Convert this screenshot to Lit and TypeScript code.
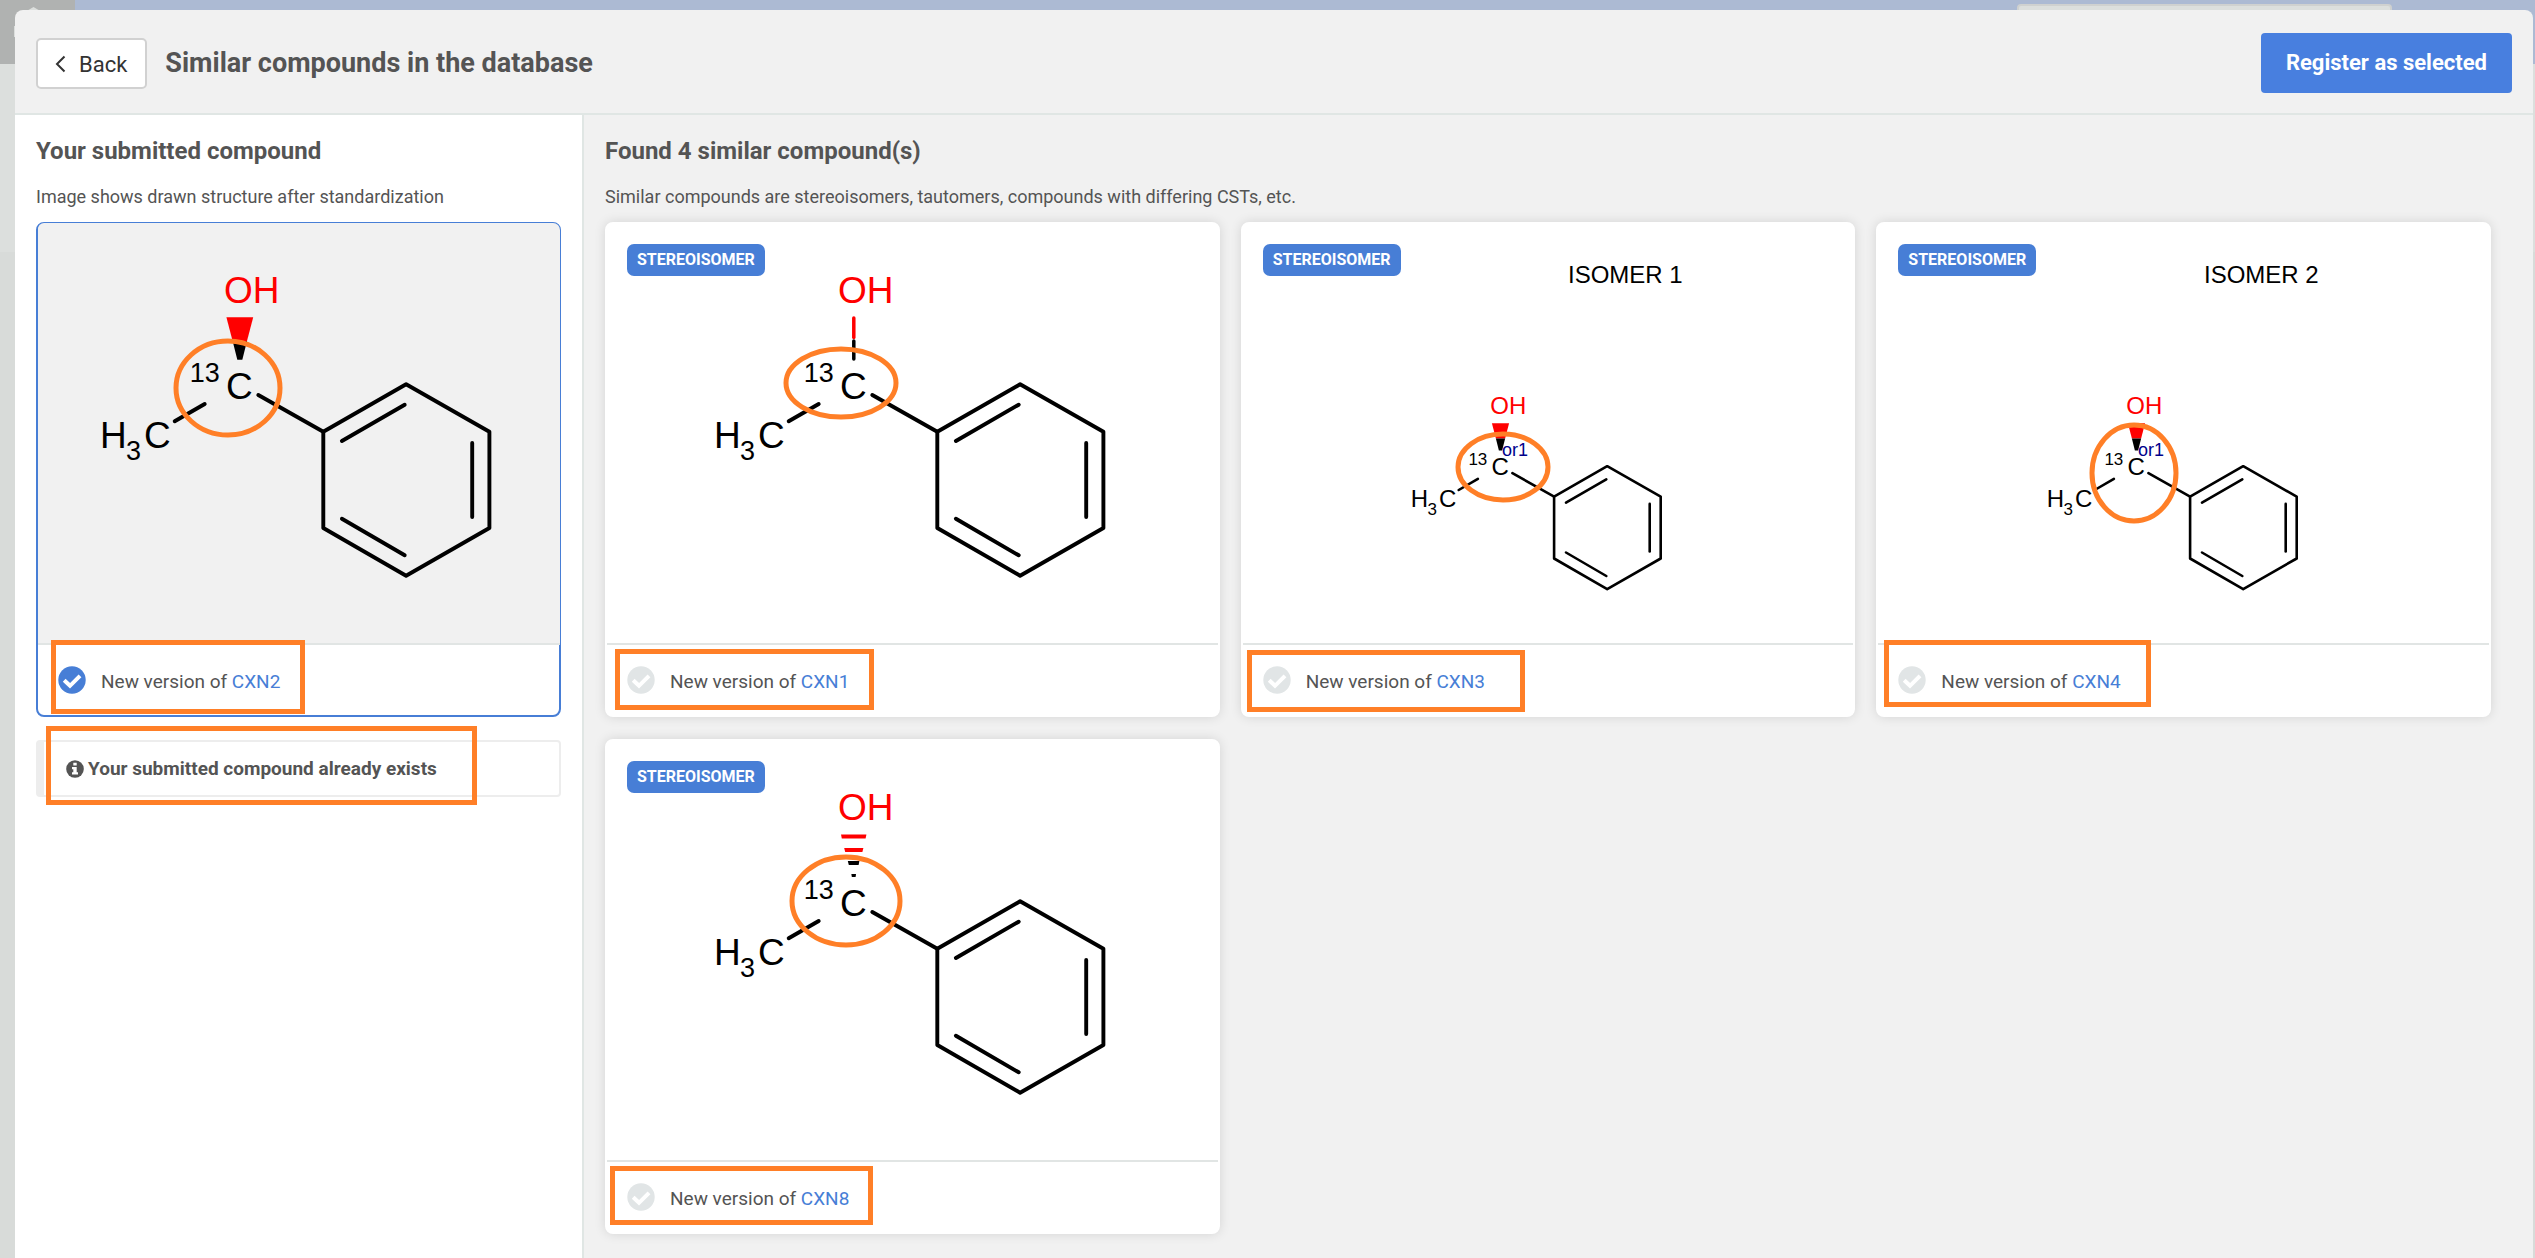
import { LitElement, html, svg, css, nothing } from "lit";
import { customElement, property } from "lit/decorators.js";
import { styleMap } from "lit/directives/style-map.js";
import { classMap } from "lit/directives/class-map.js";

type Bond = "wedge" | "plain" | "hash";

interface Compound {
  id: string;
  bond: Bond;
  small?: boolean;
  caption?: string;
  tag?: string;
  selected?: boolean;
  ring: { cx: number; cy: number; rx: number; ry: number };
  mark: { left: number; top: number; width: number; height: number };
}

const SUBMITTED: Compound = {
  id: "CXN2",
  bond: "wedge",
  selected: true,
  ring: { cx: 193, cy: 166, rx: 52, ry: 47 },
  mark: { left: 15, top: 418, width: 254, height: 74 },
};

const SIMILAR: Compound[] = [
  {
    id: "CXN1",
    bond: "plain",
    tag: "STEREOISOMER",
    ring: { cx: 192, cy: 161, rx: 55, ry: 34 },
    mark: { left: 10, top: 427, width: 259, height: 61 },
  },
  {
    id: "CXN3",
    bond: "wedge",
    small: true,
    caption: "ISOMER 1",
    tag: "STEREOISOMER",
    ring: { cx: 219, cy: 245, rx: 45, ry: 33 },
    mark: { left: 6, top: 428, width: 278, height: 62 },
  },
  {
    id: "CXN4",
    bond: "wedge",
    small: true,
    caption: "ISOMER 2",
    tag: "STEREOISOMER",
    ring: { cx: 214, cy: 251, rx: 42, ry: 48 },
    mark: { left: 8, top: 418, width: 267, height: 67 },
  },
  {
    id: "CXN8",
    bond: "hash",
    tag: "STEREOISOMER",
    ring: { cx: 197, cy: 162, rx: 54, ry: 44 },
    mark: { left: 5, top: 427, width: 263, height: 59 },
  },
];

@customElement("compound-structure")
export class CompoundStructure extends LitElement {
  @property({ attribute: false }) compound!: Compound;

  static styles = css`
    :host {
      display: flex;
      justify-content: center;
    }
    .drawing {
      display: block;
      width: 525px;
      height: 419px;
      flex: none;
      overflow: visible;
      font-family: "Liberation Sans", Arial, sans-serif;
      fill: #000;
    }
    .bond {
      stroke: #000;
      stroke-linecap: round;
      stroke-linejoin: round;
      fill: none;
    }
    .oxygen-bond {
      stroke: #f00;
    }
    .oxygen {
      fill: #f00;
    }
    .label {
      fill: #00008b;
    }
    .ring {
      fill: none;
      stroke: #ff7f27;
      stroke-width: 5;
    }
  `;

  render() {
    const c = this.compound;
    const k = c.small ? 0.642 : 1;
    const dx = c.small ? 85 : 0;
    const dy = c.small ? 140 : 0;
    const X = (v: number) => Math.round((v * k + dx) * 10) / 10;
    const Y = (v: number) => Math.round((v * k + dy) * 10) / 10;
    const P = (pts: number[][]) =>
      pts.map(([x, y]) => `${X(x)},${Y(y)}`).join(" ");
    const big = c.small ? 24 : 37;
    const sub = c.small ? 17 : 27;
    const line = (pts: number[][]) =>
      svg`<polyline class="bond" stroke-width=${c.small ? 2.6 : 3.9} points=${P(pts)} />`;

    const wedge = svg`
      <polygon class="oxygen" points=${P([[191.4, 95.3], [218.2, 95.3], [212, 119], [197.6, 119]])} />
      <polygon points=${P([[197.6, 119], [212, 119], [207.3, 137.7], [202.3, 137.7]])} />`;
    const plain = svg`
      <path class="bond" stroke-width="3.5" d="M204.8 119V137" />
      <path class="bond oxygen-bond" stroke-width="3.5" d="M204.8 96V115.500" />`;
    const hash = svg`
      <polygon class="oxygen" points="192,95.500 217.400,95.500 216.600,99.500 192.800,99.500" />
      <polygon class="oxygen" points="195.200,109 214.400,109 213.400,113 196.200,113" />
      <polygon points="198.800,122 210.400,122 209.600,126 199.800,126" />
      <polygon points="202.400,135 207,135 206.600,138 202.800,138" />`;

    return html`
      <svg class="drawing" viewBox="1 2 525 419" role="img" aria-label=${`Structure of ${c.id}`}>
        <text class="oxygen" font-size=${big} x=${X(189)} y=${Y(81.3)}>OH</text>
        ${c.bond === "wedge" ? wedge : c.bond === "plain" ? plain : hash}
        <text font-size=${sub} x=${X(154.8)} y=${Y(160)}>13</text>
        <text font-size=${big} x=${X(191)} y=${Y(176.7)}>C</text>
        <text font-size=${big} x=${X(65)} y=${Y(225.7)}>H</text>
        <text font-size=${sub} x=${X(91)} y=${Y(237.5)}>3</text>
        <text font-size=${big} x=${X(109)} y=${Y(225.7)}>C</text>
        ${c.small ? svg`<text class="label" font-size="18" x="218" y="234">or1</text>` : nothing}
        ${line([[139.7, 199.3], [169.7, 182]])}
        ${line([[223.3, 173], [288.3, 209.7]])}
        ${line([[288.3, 209.7], [371.1, 162.3], [454.4, 209.7], [454.4, 306], [371.1, 353.7], [288.3, 306], [288.3, 209.7]])}
        ${line([[306.9, 219], [369.7, 182.7]])}
        ${line([[437.2, 221], [437.2, 295]])}
        ${line([[306.9, 296.7], [369.7, 333.3]])}
        ${c.caption ? svg`<text font-size="24" x="284" y="61">${c.caption}</text>` : nothing}
        <ellipse class="ring" cx=${c.ring.cx} cy=${c.ring.cy} rx=${c.ring.rx} ry=${c.ring.ry} />
      </svg>
    `;
  }
}

@customElement("compound-card")
export class CompoundCard extends LitElement {
  @property({ attribute: false }) compound!: Compound;

  static styles = css`
    :host {
      display: block;
      min-width: 0;
    }
    .card {
      position: relative;
      box-sizing: border-box;
      border: 2px solid #fff;
      border-radius: 8px;
      background: #fff;
      box-shadow: 0 0 12px rgba(0, 0, 0, 0.12);
    }
    .card.selected {
      border-color: #477ed6;
      box-shadow: none;
    }
    .picture {
      border-bottom: 2px solid #e1e5e4;
    }
    .selected .picture {
      margin: -1px -1px 0 0;
      padding: 1px 1px 0 0;
      background: #f1f1f1;
      border-radius: 6px 7px 0 0;
    }
    .tag {
      position: absolute;
      top: 20px;
      left: 20px;
      padding: 0 10px;
      border-radius: 7px;
      background: #477ed6;
      color: #fff;
      font-size: 16px;
      line-height: 32px;
      font-weight: 700;
    }
    .choice {
      display: flex;
      align-items: center;
      gap: 15px;
      height: 70px;
      padding: 0 20px;
      font-size: 19px;
      line-height: 28px;
    }
    .pick {
      display: flex;
      padding: 0;
      border: 0;
      background: none;
      color: #e1e5e6;
      cursor: pointer;
    }
    .selected .pick {
      color: #477ed6;
    }
    .tick {
      display: block;
      width: 28px;
      height: 28px;
    }
    .version {
      padding-top: 3px;
    }
    .link {
      color: #477ed6;
      text-decoration: none;
    }
    .mark {
      position: absolute;
      box-sizing: border-box;
      border: 5px solid #ff7f27;
      margin: -2px 0 0 -2px;
      pointer-events: none;
    }
  `;

  render() {
    const c = this.compound;
    const m = c.mark;
    return html`
      <article class=${classMap({ card: true, selected: !!c.selected })}>
        <compound-structure class="picture" .compound=${c}></compound-structure>
        ${c.tag ? html`<span class="tag">${c.tag}</span>` : nothing}
        <div class="choice">
          <button class="pick" type="button" aria-pressed=${c.selected ? "true" : "false"} aria-label=${`Select ${c.id}`}>
            <svg class="tick" viewBox="0 0 28 28" aria-hidden="true">
              <circle cx="14" cy="14" r="13.700" fill="currentColor" />
              <path d="M6.200 14.200L12 19.800L22 9.800" fill="none" stroke="#fff" stroke-width="4" />
            </svg>
          </button>
          <span class="version">New version of <a class="link" href="#${c.id}">${c.id}</a></span>
        </div>
        <div
          class="mark"
          style=${styleMap({
            left: `${m.left}px`,
            top: `${m.top}px`,
            width: `${m.width}px`,
            height: `${m.height}px`,
          })}
        ></div>
      </article>
    `;
  }
}

@customElement("app-root")
export class AppRoot extends LitElement {
  static styles = css`
    :host {
      display: block;
      font-family: Roboto, "Liberation Sans", sans-serif;
      color: #545454;
    }
    .page {
      position: relative;
      box-sizing: border-box;
      height: 100vh;
      padding: 10px 2px 0 15px;
      overflow: hidden;
      background: linear-gradient(#dcdfdd 252px, #d8dbd9 252px);
    }
    .topbar {
      position: absolute;
      inset: 0 0 auto 0;
      display: flex;
      justify-content: space-between;
      height: 64px;
      background: #acbad3;
    }
    .brand {
      width: 75px;
      background: #b0b2b1;
    }
    .brand-icon {
      display: block;
      width: 75px;
      height: 64px;
    }
    .search {
      box-sizing: border-box;
      width: 375px;
      height: 40px;
      margin: 4px 143px 0 auto;
      border: 2px solid #cfd1d0;
      border-radius: 4px;
      background: #dcdfdd;
    }
    .dialog {
      position: relative;
      display: flex;
      flex-direction: column;
      height: 100%;
      border-radius: 8px 8px 0 0;
      background: #f1f1f1;
      overflow: hidden;
    }
    .header {
      display: flex;
      align-items: center;
      gap: 18px;
      padding: 23px 21px 20px;
      border-bottom: 2px solid #e0e6e4;
    }
    .back {
      display: flex;
      align-items: center;
      gap: 13px;
      padding: 2px 18px 0 17px;
      border: 2px solid #d1d1d1;
      border-radius: 5px;
      background: #fff;
      color: #333;
      font: 400 22px/45px Roboto, sans-serif;
      cursor: pointer;
    }
    .chevron {
      display: block;
      width: 11px;
      height: 18px;
    }
    .title {
      flex: 1;
      margin: 0;
      font-size: 27px;
      line-height: 32px;
      font-weight: 700;
    }
    .register {
      padding: 0 25px;
      border: 0;
      border-radius: 4px;
      background: #487fdf;
      color: #fff;
      font: 700 22px/60px Roboto, sans-serif;
      cursor: pointer;
    }
    .body {
      flex: 1;
      display: flex;
      min-height: 0;
    }
    .own {
      box-sizing: border-box;
      flex: none;
      width: 569px;
      padding: 20px 21px;
      border-right: 2px solid #e0e6e4;
      background: #fff;
    }
    .found {
      flex: 1;
      min-width: 0;
      padding: 20px 42px 20px 21px;
    }
    .subtitle {
      margin: 0;
      font-size: 24px;
      line-height: 32px;
      font-weight: 700;
    }
    .hint {
      margin: 18px 0 0;
      font-size: 18px;
      line-height: 24px;
      padding-bottom: 13px;
    }
    .grid {
      display: grid;
      grid-template-columns: repeat(3, minmax(0, 1fr));
      gap: 22px 21px;
    }
    .notice {
      position: relative;
      box-sizing: border-box;
      display: flex;
      align-items: center;
      gap: 4px;
      height: 57px;
      margin-top: 23px;
      padding-left: 22px;
      border: 2px solid #ededed;
      border-left-width: 8px;
      border-radius: 4px;
      font-size: 19px;
      font-weight: 700;
    }
    .info {
      display: block;
      width: 18px;
      height: 18px;
    }
    .notice-mark {
      position: absolute;
      top: -16px;
      left: 2px;
      box-sizing: border-box;
      width: 431px;
      height: 79px;
      border: 5px solid #ff7f27;
      pointer-events: none;
    }
  `;

  render() {
    return html`
      <div class="page">
        <div class="topbar">
          <div class="brand">
            <svg class="brand-icon" viewBox="0 0 75 64" aria-hidden="true">
              <path d="M33.500 7L42 12V26H25V12Z" fill="#dcdfdd" />
              <path d="M14 26H16V37H14Z" fill="#dcdfdd" />
            </svg>
          </div>
          <div class="search"></div>
        </div>
        <section class="dialog" role="dialog" aria-labelledby="title">
          <header class="header">
            <button class="back" type="button">
              <svg class="chevron" viewBox="0 0 11 18" aria-hidden="true">
                <path d="M9.500 1.500L2 9L9.500 16.500" fill="none" stroke="#333" stroke-width="2" />
              </svg>
              Back
            </button>
            <h1 class="title" id="title">Similar compounds in the database</h1>
            <button class="register" type="button">Register as selected</button>
          </header>
          <div class="body">
            <aside class="own">
              <h2 class="subtitle">Your submitted compound</h2>
              <p class="hint">Image shows drawn structure after standardization</p>
              <compound-card .compound=${SUBMITTED}></compound-card>
              <div class="notice">
                <svg class="info" viewBox="0 0 18 18" aria-hidden="true">
                  <circle cx="9" cy="9" r="8.800" fill="#545454" />
                  <path d="M7.300 2.800H10.700V5.400H7.300ZM6 7H10.700V12.200H12V14.600H6V12.200H7.300V9.300H6Z" fill="#fff" />
                </svg>
                <span>Your submitted compound already exists</span>
                <div class="notice-mark"></div>
              </div>
            </aside>
            <main class="found">
              <h2 class="subtitle">Found 4 similar compound(s)</h2>
              <p class="hint">
                Similar compounds are stereoisomers, tautomers, compounds with differing CSTs, etc.
              </p>
              <div class="grid">
                ${SIMILAR.map((c) => html`<compound-card .compound=${c}></compound-card>`)}
              </div>
            </main>
          </div>
        </section>
      </div>
    `;
  }
}
